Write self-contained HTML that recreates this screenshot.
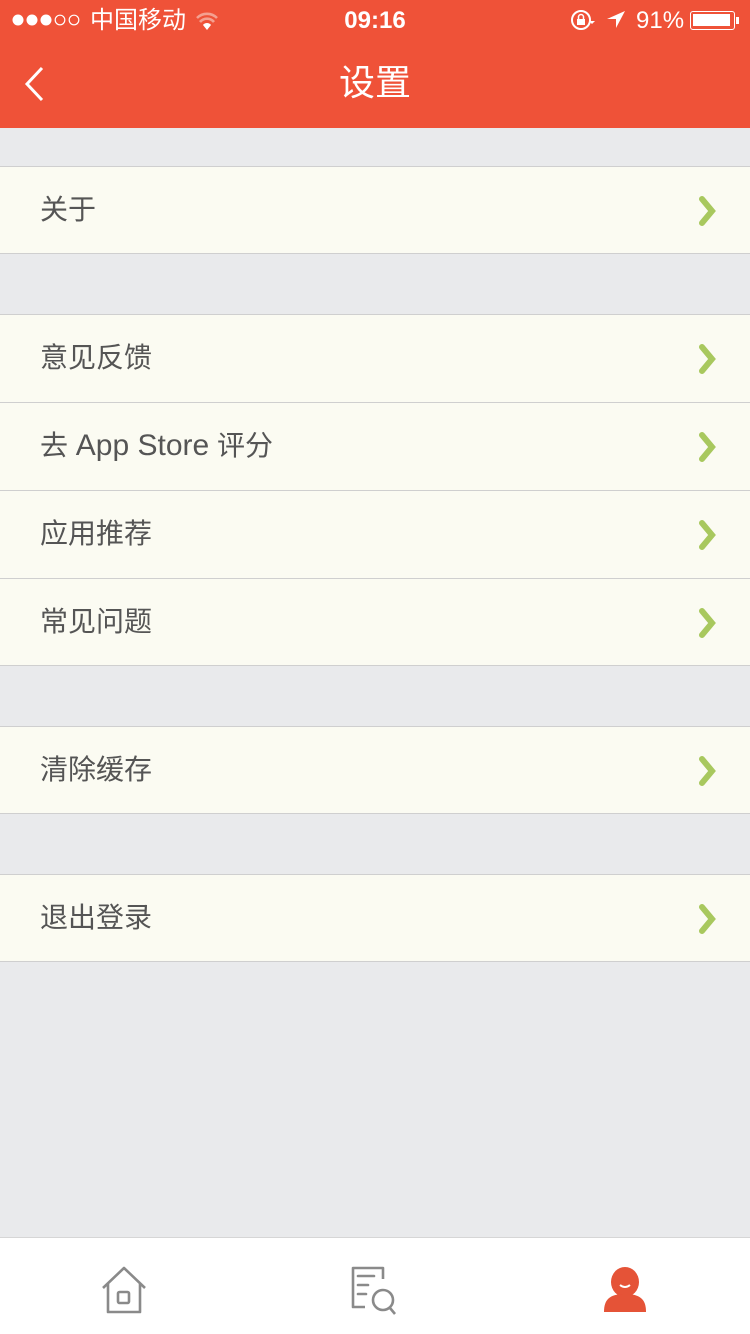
<!DOCTYPE html>
<html><head><meta charset="utf-8"><style>
*{margin:0;padding:0;box-sizing:border-box}
body{width:750px;height:1334px;background:#e9eaec;position:relative;overflow:hidden;font-family:"Liberation Sans","Noto Sans CJK SC",sans-serif}
.top{position:absolute;left:0;top:0;width:750px;height:128px;background:#ef5238;color:#fff}
.row{position:absolute;left:0;width:750px;height:88px;background:#fbfbf2;border-top:1px solid #cfcfcf}
.row.last{border-bottom:1px solid #cfcfcf}
.row span{position:absolute;left:40px;top:0;line-height:86px;font-size:28px;color:#555}
.row svg{position:absolute;left:697px;top:29px}
.tab{position:absolute;left:0;top:1237px;width:750px;height:97px;background:#fff;border-top:1px solid #d6d6d6}
</style></head><body>
<div class="top">
 <svg style="position:absolute;left:12px;top:14px" width="70" height="12" viewBox="0 0 70 12"><circle cx="6" cy="6" r="5.5" fill="#fff"/><circle cx="20" cy="6" r="5.5" fill="#fff"/><circle cx="34" cy="6" r="5.5" fill="#fff"/><circle cx="48" cy="6" r="4.8" stroke="#fff" stroke-width="1.2" fill="none"/><circle cx="62" cy="6" r="4.8" stroke="#fff" stroke-width="1.2" fill="none"/></svg>
 <div style="position:absolute;left:90px;top:6px;font-size:24px;line-height:30px">中国移动</div>
 <svg style="position:absolute;left:195px;top:11px" width="24" height="20" viewBox="0 0 24 20"><path d="M2 7a14 14 0 0 1 20 0M5 11a9 9 0 0 1 14 0" stroke="#f4a090" stroke-width="2.6" fill="none"/><path d="M8 14l4 5 4-5a5 5 0 0 0-8 0z" fill="#fff"/></svg>
 <div style="position:absolute;left:0;width:750px;text-align:center;top:6px;font-size:24px;font-weight:bold;line-height:30px">09:16</div>
 <svg style="position:absolute;left:570px;top:9px" width="26" height="22" viewBox="0 0 26 22"><circle cx="11" cy="11" r="9" stroke="#fff" stroke-width="2" fill="none"/><rect x="7" y="10" width="8" height="6" fill="#fff"/><path d="M8.5 10V8a2.5 2.5 0 0 1 5 0v2" stroke="#fff" stroke-width="1.5" fill="none"/><path d="M19 12l3 3 3-3z" fill="#fff"/></svg>
 <svg style="position:absolute;left:606px;top:10px" width="20" height="20" viewBox="0 0 20 20"><path d="M19 1L1 9h9v9z" fill="#fff"/></svg>
 <div style="position:absolute;left:636px;top:6px;font-size:24px;line-height:30px">91%</div>
 <div style="position:absolute;left:690px;top:11px;width:45px;height:19px;border:1.5px solid #fff;border-radius:3px;padding:2px"><div style="width:37px;height:12px;background:#fff"></div></div>
 <div style="position:absolute;left:736px;top:17px;width:3px;height:7px;background:#fff"></div>
 <svg style="position:absolute;left:22px;top:66px" width="24" height="36" viewBox="0 0 24 36"><path d="M20 2L5 18l15 16" stroke="#fff" stroke-width="3" fill="none"/></svg>
 <div style="position:absolute;left:0;width:750px;text-align:center;top:60px;font-size:36px;line-height:46px">设置</div>
</div>
<div class="row last" style="top:166px"><span>关于</span><svg width="22" height="30"><path d="M5 3l10 12-10 12" stroke="#a8c85e" stroke-width="6" fill="none" stroke-linecap="round"/></svg></div>
<div class="row" style="top:314px"><span>意见反馈</span><svg width="22" height="30"><path d="M5 3l10 12-10 12" stroke="#a8c85e" stroke-width="6" fill="none" stroke-linecap="round"/></svg></div>
<div class="row" style="top:402px"><span>去 <b style="font-weight:normal;font-size:30px">App Store</b> 评分</span><svg width="22" height="30"><path d="M5 3l10 12-10 12" stroke="#a8c85e" stroke-width="6" fill="none" stroke-linecap="round"/></svg></div>
<div class="row" style="top:490px"><span>应用推荐</span><svg width="22" height="30"><path d="M5 3l10 12-10 12" stroke="#a8c85e" stroke-width="6" fill="none" stroke-linecap="round"/></svg></div>
<div class="row last" style="top:578px"><span>常见问题</span><svg width="22" height="30"><path d="M5 3l10 12-10 12" stroke="#a8c85e" stroke-width="6" fill="none" stroke-linecap="round"/></svg></div>
<div class="row last" style="top:726px"><span>清除缓存</span><svg width="22" height="30"><path d="M5 3l10 12-10 12" stroke="#a8c85e" stroke-width="6" fill="none" stroke-linecap="round"/></svg></div>
<div class="row last" style="top:874px"><span>退出登录</span><svg width="22" height="30"><path d="M5 3l10 12-10 12" stroke="#a8c85e" stroke-width="6" fill="none" stroke-linecap="round"/></svg></div>
<div class="tab">
 <svg style="position:absolute;left:100px;top:28px" width="50" height="50" viewBox="0 0 50 50"><path d="M3 22L24 2 45 22M8 18v28h32V18" stroke="#8a8a8a" stroke-width="2.6" fill="none" stroke-linejoin="round"/><rect x="18" y="26" width="11" height="11" rx="1.5" stroke="#8a8a8a" stroke-width="2.6" fill="none"/></svg>
 <svg style="position:absolute;left:350px;top:28px" width="50" height="50" viewBox="0 0 50 50"><path d="M33 13V2H3v39h12" stroke="#8a8a8a" stroke-width="2.6" fill="none" stroke-linejoin="round"/><path d="M8 10h16M8 19h10M8 28h8" stroke="#8a8a8a" stroke-width="2.6" stroke-linecap="round"/><circle cx="33" cy="34" r="10" stroke="#8a8a8a" stroke-width="2.6" fill="none"/><path d="M40 42l5 6" stroke="#8a8a8a" stroke-width="2.6"/></svg>
 <svg style="position:absolute;left:603px;top:28px" width="44" height="50" viewBox="0 0 44 50"><ellipse cx="22" cy="16" rx="14" ry="15" fill="#e55337"/><path d="M1 46c0-12 5-18 21-18s21 6 21 18z" fill="#e55337"/><path d="M17 19q5 4 10 0" stroke="#fff" stroke-width="2" fill="none"/></svg>
</div>
</body></html>
